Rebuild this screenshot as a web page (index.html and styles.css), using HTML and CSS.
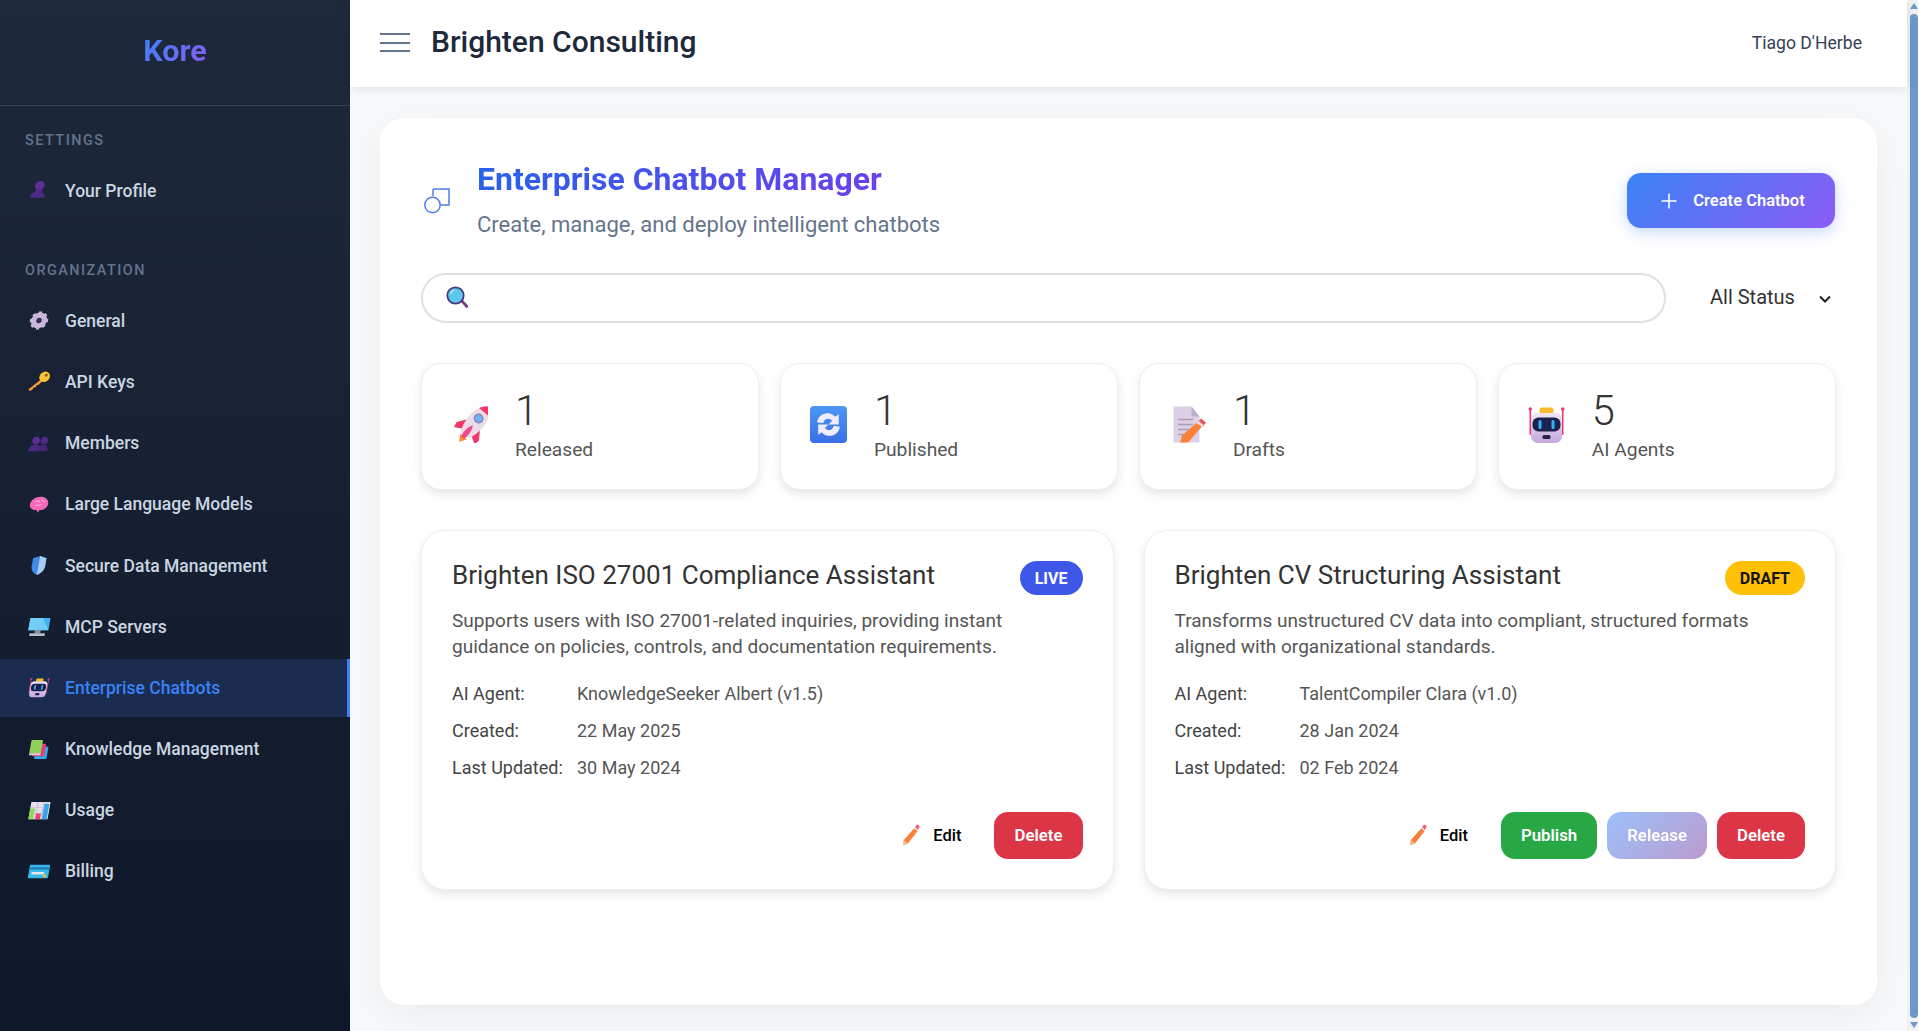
FILE: index.html
```html
<!DOCTYPE html>
<html lang="en">
<head>
  <meta charset="UTF-8" />
  <title>Enterprise Chatbot Manager - Kore</title>
  <link rel="stylesheet" href="styles.css">
</head>
<body>
  <!-- icons used more than once -->
  <svg class="sprite" aria-hidden="true">
    <defs>
      <linearGradient id="botBody" x1="0" y1="0" x2="0" y2="1">
        <stop offset="0" stop-color="#efe6f2"/>
        <stop offset="1" stop-color="#c4a8dc"/>
      </linearGradient>
      <linearGradient id="syncBg" x1="0" y1="0" x2="0" y2="1">
        <stop offset="0" stop-color="#4c97f3"/>
        <stop offset="1" stop-color="#3a6fe6"/>
      </linearGradient>
      <symbol id="icon-robot" viewBox="0 0 37 37">
        <rect x="1.500" y="3" width="1.600" height="26" rx=".8" fill="#f0386b"/>
        <rect x="33.900" y="3" width="1.600" height="26" rx=".8" fill="#f0386b"/>
        <circle cx="2.300" cy="3" r="1.800" fill="#f0386b"/>
        <circle cx="34.700" cy="3" r="1.800" fill="#f0386b"/>
        <rect x="11.500" y="1.500" width="14" height="6" rx="2.500" fill="#f5bd2e"/>
        <path d="M9 7h19c3.500 0 6 2.500 6 6v17c0 4-3 7-7 7H10c-4 0-7-3-7-7V13c0-3.500 2.500-6 6-6z" fill="url(#botBody)"/>
        <rect x="4.500" y="11.500" width="28" height="14" rx="6" fill="#1c2250"/>
        <rect x="10.500" y="14" width="3" height="9" rx="1.500" fill="#35b4f4"/>
        <rect x="23.500" y="14" width="3" height="9" rx="1.500" fill="#35b4f4"/>
        <rect x="14.500" y="29" width="8" height="4" rx="1.500" fill="#2a2350"/>
      </symbol>
      <symbol id="icon-pencil" viewBox="0 0 20 24">
        <path d="M13.500 4.500l4 3L6.500 21.500 1.500 23.500l.5-6z" fill="#f9803a"/>
        <path d="M14.500 3l2-2.500c.8-.4 3 1.400 3 2.500l-2 3.500z" fill="#f45a6a"/>
        <path d="M13.500 4.500l1-1.500 3 3.500-.5 1z" fill="#e8dcec"/>
        <path d="M2 17.500l4.500 4-5 2z" fill="#f7b98a"/>
      </symbol>
    </defs>
  </svg>

  <div class="app">
    <aside class="sidebar">
      <div class="logo"><span class="logo-text">Kore</span></div>

      <div class="nav-section">
        <div class="nav-label">SETTINGS</div>
        <a class="nav-item">
          <svg class="nav-icon" viewBox="0 0 24 24"><circle cx="12.500" cy="7" r="5" fill="#5a2f96"/><path d="M9 11h7c0 2 .5 3 1.500 4 1.500 1 2.500 2.500 2.500 4.500H4c0-2 1-3.500 2.500-4.500C8 14 9 13 9 11z" fill="#4d2a86"/></svg>
          Your Profile
        </a>
      </div>

      <div class="nav-section">
        <div class="nav-label">ORGANIZATION</div>
        <a class="nav-item">
          <svg class="nav-icon" viewBox="0 0 24 24"><circle cx="12.500" cy="12" r="6" fill="none" stroke="#c9b6d8" stroke-width="4.500"/><path d="M12.500 2.500v19M3 12h19M5.800 5.300l13.400 13.400M19.200 5.300L5.800 18.700" stroke="#c9b6d8" stroke-width="3.500"/><circle cx="12.500" cy="12" r="2.800" fill="#3b2a5c"/></svg>
          General
        </a>
        <a class="nav-item">
          <svg class="nav-icon" viewBox="0 0 24 24"><path d="M15 9L3 20l1.500 2 2.500-1.500 1-2 2-.5 1-2 2-.5 3-4z" fill="#f79a3c"/><circle cx="17.500" cy="7" r="5.500" fill="#f8c532"/><circle cx="19" cy="5.500" r="1.500" fill="#8a5a1a"/></svg>
          API Keys
        </a>
        <a class="nav-item">
          <svg class="nav-icon" viewBox="0 0 24 24"><circle cx="9" cy="9" r="4" fill="#5a2f96"/><circle cx="17.500" cy="9" r="4" fill="#4d2a86"/><path d="M2.500 20c0-4 2.500-7 6.500-7s5 3 5 7z" fill="#4d2a86"/><path d="M11.500 20c0-4 2-7 6-7s5 3 5 7z" fill="#452578"/></svg>
          Members
        </a>
        <a class="nav-item">
          <svg class="nav-icon" viewBox="0 0 24 24"><path d="M3 12c0-4.500 4.500-8 10-8s9 3.500 9 7.500c0 3.500-3.500 6.500-8 6.500l-1.500 2.500-1-2.500C7 18 3 16 3 12z" fill="#f06ab8"/><path d="M8 9c2-1.500 3 0 5-.5M9 13c2-1 4 .5 6-1M14 6.500c1 1.500 3 1 4 3" stroke="#fbb4dc" stroke-width="1" fill="none"/></svg>
          Large Language Models
        </a>
        <a class="nav-item">
          <svg class="nav-icon" viewBox="0 0 24 24"><path d="M12 2l7 2.500v8c0 4.500-3 7.500-7 9.500-4-2-7-5-7-9.500v-8z" fill="#3f8ce8"/><path d="M12 2l7 2.500v8c0 4.500-3 7.500-7 9.500z" fill="#a9cdf2"/></svg>
          Secure Data Management
        </a>
        <a class="nav-item">
          <svg class="nav-icon" viewBox="0 0 24 24"><rect x="2" y="3" width="21" height="13" rx="1" fill="#3fb4f2"/><path d="M2 3h13l8 13H2z" fill="#6fcdf6"/><rect x="9" y="16" width="6" height="3" fill="#8d93a8"/><rect x="4" y="19" width="16" height="3" fill="#b6bac6"/></svg>
          MCP Servers
        </a>
        <a class="nav-item active">
          <svg class="nav-icon" viewBox="-3 -3 43 43"><use href="#icon-robot" width="37" height="37"/></svg>
          Enterprise Chatbots
        </a>
        <a class="nav-item">
          <svg class="nav-icon" viewBox="0 0 24 24"><rect x="9" y="9" width="13" height="13" rx="1" fill="#35a5ee"/><rect x="6" y="6" width="13" height="13" rx="1" fill="#e83e72"/><rect x="3" y="2" width="12" height="14" rx="1" fill="#8ed25c"/><rect x="3" y="16" width="12" height="2" fill="#d9cfe0"/></svg>
          Knowledge Management
        </a>
        <a class="nav-item">
          <svg class="nav-icon" viewBox="0 0 24 24"><rect x="3" y="3" width="20" height="18" fill="#e6deea"/><path d="M3 9h20M3 15h20M10 3v18M16 3v18" stroke="#c9bfd4"/><rect x="3" y="10" width="5" height="11" fill="#8fd95e"/><rect x="10" y="15" width="5" height="6" fill="#ee3f76"/><rect x="17" y="5" width="5" height="16" fill="#35a5ee"/></svg>
          Usage
        </a>
        <a class="nav-item">
          <svg class="nav-icon" viewBox="0 0 24 24"><rect x="2" y="5" width="21" height="14" rx="1" fill="#38b6ea"/><rect x="2" y="7.500" width="21" height="2.500" fill="#1c7fb4"/><rect x="5" y="12.500" width="13" height="2.500" fill="#dfe6ee"/><rect x="17.500" y="15" width="3" height="3" fill="#f4c430"/></svg>
          Billing
        </a>
      </div>
    </aside>

    <div class="main">
      <header class="topbar">
        <div class="topbar-left">
          <button class="menu-btn"><span></span><span></span><span></span></button>
          <h1 class="org-name">Brighten Consulting</h1>
        </div>
        <div class="user-name">Tiago D'Herbe</div>
      </header>

      <div class="content">
        <section class="panel">
          <div class="page-head">
            <svg class="page-icon" viewBox="0 0 26 26"><path d="M9 1h16v16H17" fill="none" stroke="#4f7df0" stroke-width="1.500"/><path d="M9 1v7" fill="none" stroke="#4f7df0" stroke-width="1.500"/><circle cx="8.500" cy="17" r="7.700" fill="none" stroke="#4f7df0" stroke-width="1.500"/></svg>
            <div class="page-title">
              <h2>Enterprise Chatbot Manager</h2>
              <p>Create, manage, and deploy intelligent chatbots</p>
            </div>
            <button class="create-btn"><svg viewBox="0 0 16 16"><path d="M8 .5v15M.5 8h15" stroke="#fff" stroke-width="1.500"/></svg>Create Chatbot</button>
          </div>

          <div class="filters">
            <div class="search">
              <svg viewBox="0 0 24 24"><path d="M14 15l2-2 6 6.500c.8 1-.8 3-2 2.200z" fill="#7a3f86"/><circle cx="9.500" cy="9.500" r="8.200" fill="#5cc8ea" stroke="#4a3585" stroke-width="1.800"/><path d="M4.500 8c.5-2 2-3.500 4-4" stroke="#a8e4f6" stroke-width="1.500" fill="none"/></svg>
            </div>
            <div class="status-select">
              All Status
              <svg viewBox="0 0 12 8"><path d="M1 1.500l5 5 5-5" fill="none" stroke="#222" stroke-width="2"/></svg>
            </div>
          </div>

          <div class="stats">
            <div class="stat-card">
              <svg class="stat-icon" viewBox="0 0 37 37">
                <g transform="translate(19 19) scale(1.120) translate(-14.600 -19) rotate(40 18.500 18.500) translate(1 0)">
                  <path d="M13 33h8l-4 6z" fill="#f98a2e"/>
                  <path d="M11 17L4 27l1 5 7-4zM23 17l7 10-1 5-7-4z" fill="#f0386b"/>
                  <path d="M17 -2C26 5 27 18 22 31H12C7 18 8 5 17 -2z" fill="#e9dde9"/>
                  <path d="M17 -2c2.500 2 4.500 4.200 5.800 6.500H11.200C12.500 2.200 14.500 0 17 -2z" fill="#f0386b"/>
                  <path d="M17 20c2 3 3 8 2 14h-4c-1-6 0-11 2-14z" fill="#f24a86"/>
                  <circle cx="17" cy="12" r="3.800" fill="#6cb2f5" stroke="#8d7fb0" stroke-width="1.200"/>
                </g>
              </svg>
              <div>
                <div class="stat-num">1</div>
                <div class="stat-label">Released</div>
              </div>
            </div>
            <div class="stat-card">
              <svg class="stat-icon" viewBox="0 0 36 36">
                <rect width="36" height="36" rx="4" fill="url(#syncBg)"/>
                <path d="M7 16c.5-6 5.500-9.500 11-9 3 .3 5 1.500 6.500 3.500L28 8v10h-10l3.500-3.500c-1-1.300-2.500-2-4-2-2.500 0-4 1.800-4.500 4z" fill="#f1ecfb"/>
                <path d="M29 20c-.5 6-5.500 9.500-11 9-3-.3-5-1.500-6.500-3.500L8 28V18h10l-3.500 3.500c1 1.300 2.500 2 4 2 2.500 0 4-1.800 4.500-4z" fill="#f1ecfb"/>
              </svg>
              <div>
                <div class="stat-num">1</div>
                <div class="stat-label">Published</div>
              </div>
            </div>
            <div class="stat-card">
              <svg class="stat-icon" viewBox="0 0 37 36">
                <path d="M4.500 0h18l8 10v26h-26z" fill="#ddd0e4"/>
                <path d="M22.500 0l8 10h-8z" fill="#bdb0c8"/>
                <path d="M9 13h15M9 18h15M9 23h11M9 28h6" stroke="#a89bb4" stroke-width="1.500"/>
                <path d="M28 16l5 4-14 16h-8l2-7z" fill="#f9803a"/>
                <path d="M29 15l3-3 5 4-3 4z" fill="#f4565f"/>
                <path d="M27.500 16.500l2-2 5 4-1.500 1.500z" fill="#f5e4e6"/>
              </svg>
              <div>
                <div class="stat-num">1</div>
                <div class="stat-label">Drafts</div>
              </div>
            </div>
            <div class="stat-card">
              <svg class="stat-icon" viewBox="0 0 37 37"><use href="#icon-robot" width="37" height="37"/></svg>
              <div>
                <div class="stat-num">5</div>
                <div class="stat-label">AI Agents</div>
              </div>
            </div>
          </div>

          <div class="bots">
            <article class="bot-card">
              <div class="bot-head">
                <h3>Brighten ISO 27001 Compliance Assistant</h3>
                <span class="badge live">LIVE</span>
              </div>
              <p class="bot-desc">Supports users with ISO 27001-related inquiries, providing instant guidance on policies, controls, and documentation requirements.</p>
              <dl class="bot-meta">
                <dt>AI Agent:</dt><dd>KnowledgeSeeker Albert (v1.5)</dd>
                <dt>Created:</dt><dd>22 May 2025</dd>
                <dt>Last Updated:</dt><dd>30 May 2024</dd>
              </dl>
              <div class="bot-actions">
                <button class="btn edit"><svg viewBox="0 0 20 24"><use href="#icon-pencil"/></svg>Edit</button>
                <button class="btn delete">Delete</button>
              </div>
            </article>

            <article class="bot-card">
              <div class="bot-head">
                <h3>Brighten CV Structuring Assistant</h3>
                <span class="badge draft">DRAFT</span>
              </div>
              <p class="bot-desc">Transforms unstructured CV data into compliant, structured formats aligned with organizational standards.</p>
              <dl class="bot-meta">
                <dt>AI Agent:</dt><dd>TalentCompiler Clara (v1.0)</dd>
                <dt>Created:</dt><dd>28 Jan 2024</dd>
                <dt>Last Updated:</dt><dd>02 Feb 2024</dd>
              </dl>
              <div class="bot-actions">
                <button class="btn edit"><svg viewBox="0 0 20 24"><use href="#icon-pencil"/></svg>Edit</button>
                <button class="btn publish">Publish</button>
                <button class="btn release">Release</button>
                <button class="btn delete">Delete</button>
              </div>
            </article>
          </div>
        </section>
      </div>
    </div>

    <div class="scrollbar">
      <span class="arrow up"></span>
      <span class="thumb"></span>
      <span class="arrow down"></span>
    </div>
  </div>
</body>
</html>
```

FILE: styles.css
```css
* {
  box-sizing: border-box;
}

html, body {
  margin: 0;
  height: 100%;
  overflow: hidden;
}

body {
  font-family: Roboto, "Liberation Sans", sans-serif;
  background-color: #f8f9fb;
  color: #333;
}

button {
  font-family: inherit;
  border: none;
  background: none;
  padding: 0;
}

/* holds the shared symbols, display:none would break their gradients */
.sprite {
  position: absolute;
  width: 0;
  height: 0;
}

.app {
  display: flex;
  height: 1031px;
}

/* sidebar */
.sidebar {
  width: 350px;
  flex-shrink: 0;
  background: linear-gradient(180deg, #1e293b 0%, #0f172a 100%);
  color: #cbd5e1;
}

.logo {
  height: 106px;
  display: flex;
  align-items: center;
  justify-content: center;
  border-bottom: 1px solid #334155;
  padding-bottom: 4px;
}

.logo-text {
  font-size: 30.400px;
  font-weight: 700;
  background: linear-gradient(135deg, #3b82f6, #8b5cf6);
  -webkit-background-clip: text;
  background-clip: text;
  color: transparent;
}

.nav-section {
  padding-top: 26px;
  margin-bottom: 17px;
}

.nav-label {
  font-size: 14.400px;
  line-height: 17px;
  font-weight: 500;
  letter-spacing: 1.500px;
  color: #64748b;
  padding-left: 25px;
  margin-bottom: 13px;
}

.nav-item {
  display: flex;
  align-items: center;
  height: 57.200px;
  margin-bottom: 4px;
  padding-left: 27px;
  font-size: 17.500px;
  font-weight: 500;
  color: #cbd5e1;
}

.nav-item.active {
  background: #1a2c50;
  border-right: 3px solid #3b82f6;
  color: #3b82f6;
}

.nav-icon {
  width: 23px;
  height: 23px;
  margin-right: 15px;
  flex-shrink: 0;
  transform: skewX(-10deg);
}

/* top bar */
.main {
  flex: 1;
  min-width: 0;
  display: flex;
  flex-direction: column;
}

.topbar {
  height: 87px;
  flex-shrink: 0;
  display: flex;
  align-items: center;
  justify-content: space-between;
  padding: 0 45px 2px 30px;
  background: #fff;
  box-shadow: 0 2px 10px rgba(0, 0, 0, 0.1);
  position: relative;
}

.topbar-left {
  display: flex;
  align-items: center;
  gap: 21px;
}

.menu-btn {
  width: 30px;
  display: flex;
  flex-direction: column;
  gap: 6.500px;
}

.menu-btn span {
  display: block;
  height: 2px;
  background: #64748b;
}

.org-name {
  margin: 0 0 2px;
  font-size: 30px;
  font-weight: 500;
  color: #1e293b;
}

.user-name {
  font-size: 17.600px;
  color: #334155;
}

/* main panel */
.content {
  flex: 1;
  padding: 31px 30px 26px;
  min-height: 0;
}

.panel {
  height: 100%;
  background: #fff;
  border-radius: 24px;
  padding: 41px 41px 0 41px;
  box-shadow: 0 10px 40px rgba(0, 0, 0, 0.06);
}

.page-head {
  display: flex;
  align-items: flex-start;
  margin-bottom: 36px;
}

.page-icon {
  width: 26px;
  height: 26px;
  margin: 29px 27px 0 3px;
  flex-shrink: 0;
}

.page-title {
  flex: 1;
}

.page-title h2 {
  margin: 0;
  padding-top: 1px;
  font-size: 32px;
  line-height: 38px;
  font-weight: 700;
  background: linear-gradient(135deg, #2563eb, #6d3fee);
  -webkit-background-clip: text;
  background-clip: text;
  color: transparent;
  width: fit-content;
}

.page-title p {
  margin: 14px 0 0;
  font-size: 22.040px;
  line-height: 25px;
  color: #64748b;
}

.create-btn {
  width: 208px;
  height: 55px;
  margin: 14px 1px 0 0;
  padding-left: 4px;
  display: flex;
  align-items: center;
  justify-content: center;
  gap: 16px;
  border-radius: 14px;
  background: linear-gradient(135deg, #3b82f6, #8b5cf6);
  box-shadow: 0 4px 15px rgba(59, 130, 246, 0.3);
  color: #fff;
  font-size: 16.500px;
  font-weight: 600;
}

.create-btn svg {
  width: 16px;
  height: 16px;
}

.filters {
  display: flex;
  align-items: center;
  margin-bottom: 40px;
}

.search {
  width: 1245px;
  height: 50px;
  border: 2px solid #e0e0e0;
  border-radius: 25px;
  display: flex;
  align-items: center;
  padding-left: 23px;
}

.search svg {
  width: 24px;
  height: 24px;
}

.status-select {
  flex: 1;
  display: flex;
  align-items: center;
  justify-content: space-between;
  padding: 0 5px 2px 44px;
  font-size: 20px;
  color: #333;
}

.status-select svg {
  width: 12px;
  height: 8px;
  margin-top: 3px;
}

.stats {
  display: grid;
  grid-template-columns: repeat(4, 1fr);
  gap: 20.800px;
  margin-bottom: 40px;
}

.stat-card {
  height: 127px;
  display: flex;
  align-items: flex-start;
  gap: 27px;
  padding: 23px 29px;
  border: 1px solid #eee;
  border-radius: 20px;
  background: #fff;
  box-shadow: 0 4px 10px rgba(0, 0, 0, 0.1);
}

.stat-icon {
  width: 37px;
  height: 37px;
  margin-top: 19px;
  flex-shrink: 0;
}

.stat-num {
  font-size: 41.600px;
  line-height: 48px;
  font-weight: 300;
  color: #333;
}

.stat-label {
  margin-top: 4px;
  font-size: 19.200px;
  line-height: 22px;
  color: #555;
}

/* chatbot cards */
.bots {
  display: grid;
  grid-template-columns: repeat(2, 1fr);
  gap: 30px;
}

.bot-card {
  height: 360px;
  padding: 30px;
  border: 1px solid #eee;
  border-radius: 24px;
  background: #fff;
  box-shadow: 0 4px 10px rgba(0, 0, 0, 0.1);
}

.bot-head {
  display: flex;
  justify-content: space-between;
  align-items: flex-start;
  height: 34px;
  margin-bottom: 13px;
}

.bot-head h3 {
  margin: -1px 0 0;
  font-size: 26px;
  line-height: 30px;
  font-weight: 400;
  color: #333;
}

.badge {
  height: 34px;
  display: flex;
  align-items: center;
  padding: 0 15px;
  border-radius: 17px;
  font-size: 16px;
  font-weight: 700;
}

.badge.live {
  background: #3f57e8;
  color: #fff;
}

.badge.draft {
  background: #ffc107;
  color: #111;
}

.bot-desc {
  margin: 0 0 14.500px;
  font-size: 19px;
  line-height: 26px;
  height: 52px;
  color: #555;
}

.bot-meta {
  display: grid;
  grid-template-columns: 125px 1fr;
  grid-auto-rows: 37px;
  align-items: center;
  margin: 0 0 26.500px;
  font-size: 18px;
  color: #555;
}

.bot-meta dt {
  color: #444;
}

.bot-meta dd {
  margin: 0;
}

.bot-actions {
  display: flex;
  justify-content: flex-end;
  gap: 10px;
}

.btn {
  height: 47px;
  padding: 0 20px 1px;
  border-radius: 14px;
  color: #fff;
  font-size: 16.800px;
  font-weight: 600;
}

.btn.edit {
  display: flex;
  align-items: center;
  gap: 13px;
  padding-right: 23px;
  color: #000;
  font-size: 16.500px;
  font-weight: 500;
}

.btn.edit svg {
  width: 18px;
  height: 22px;
}

.btn.delete {
  background: #dc3545;
}

.btn.publish {
  background: #28a745;
}

.btn.release {
  background: linear-gradient(135deg, #3b82f6, #7c3aa0);
  opacity: 0.5;
}

/* scrollbar strip on the right */
.scrollbar {
  width: 11px;
  flex-shrink: 0;
  background: #f1f1f1;
  display: flex;
  flex-direction: column;
  align-items: center;
  padding: 3px 0;
}

.thumb {
  flex: 1;
  width: 8px;
  margin: 5px 0 4px 3px;
  border-radius: 4px;
  background: #6c99c9;
}

.arrow {
  width: 0;
  height: 0;
  margin-left: 2px;
  border-left: 4px solid transparent;
  border-right: 4px solid transparent;
}

.arrow.up {
  border-bottom: 6px solid #6c99c9;
}

.arrow.down {
  border-top: 6px solid #6c99c9;
}
```
